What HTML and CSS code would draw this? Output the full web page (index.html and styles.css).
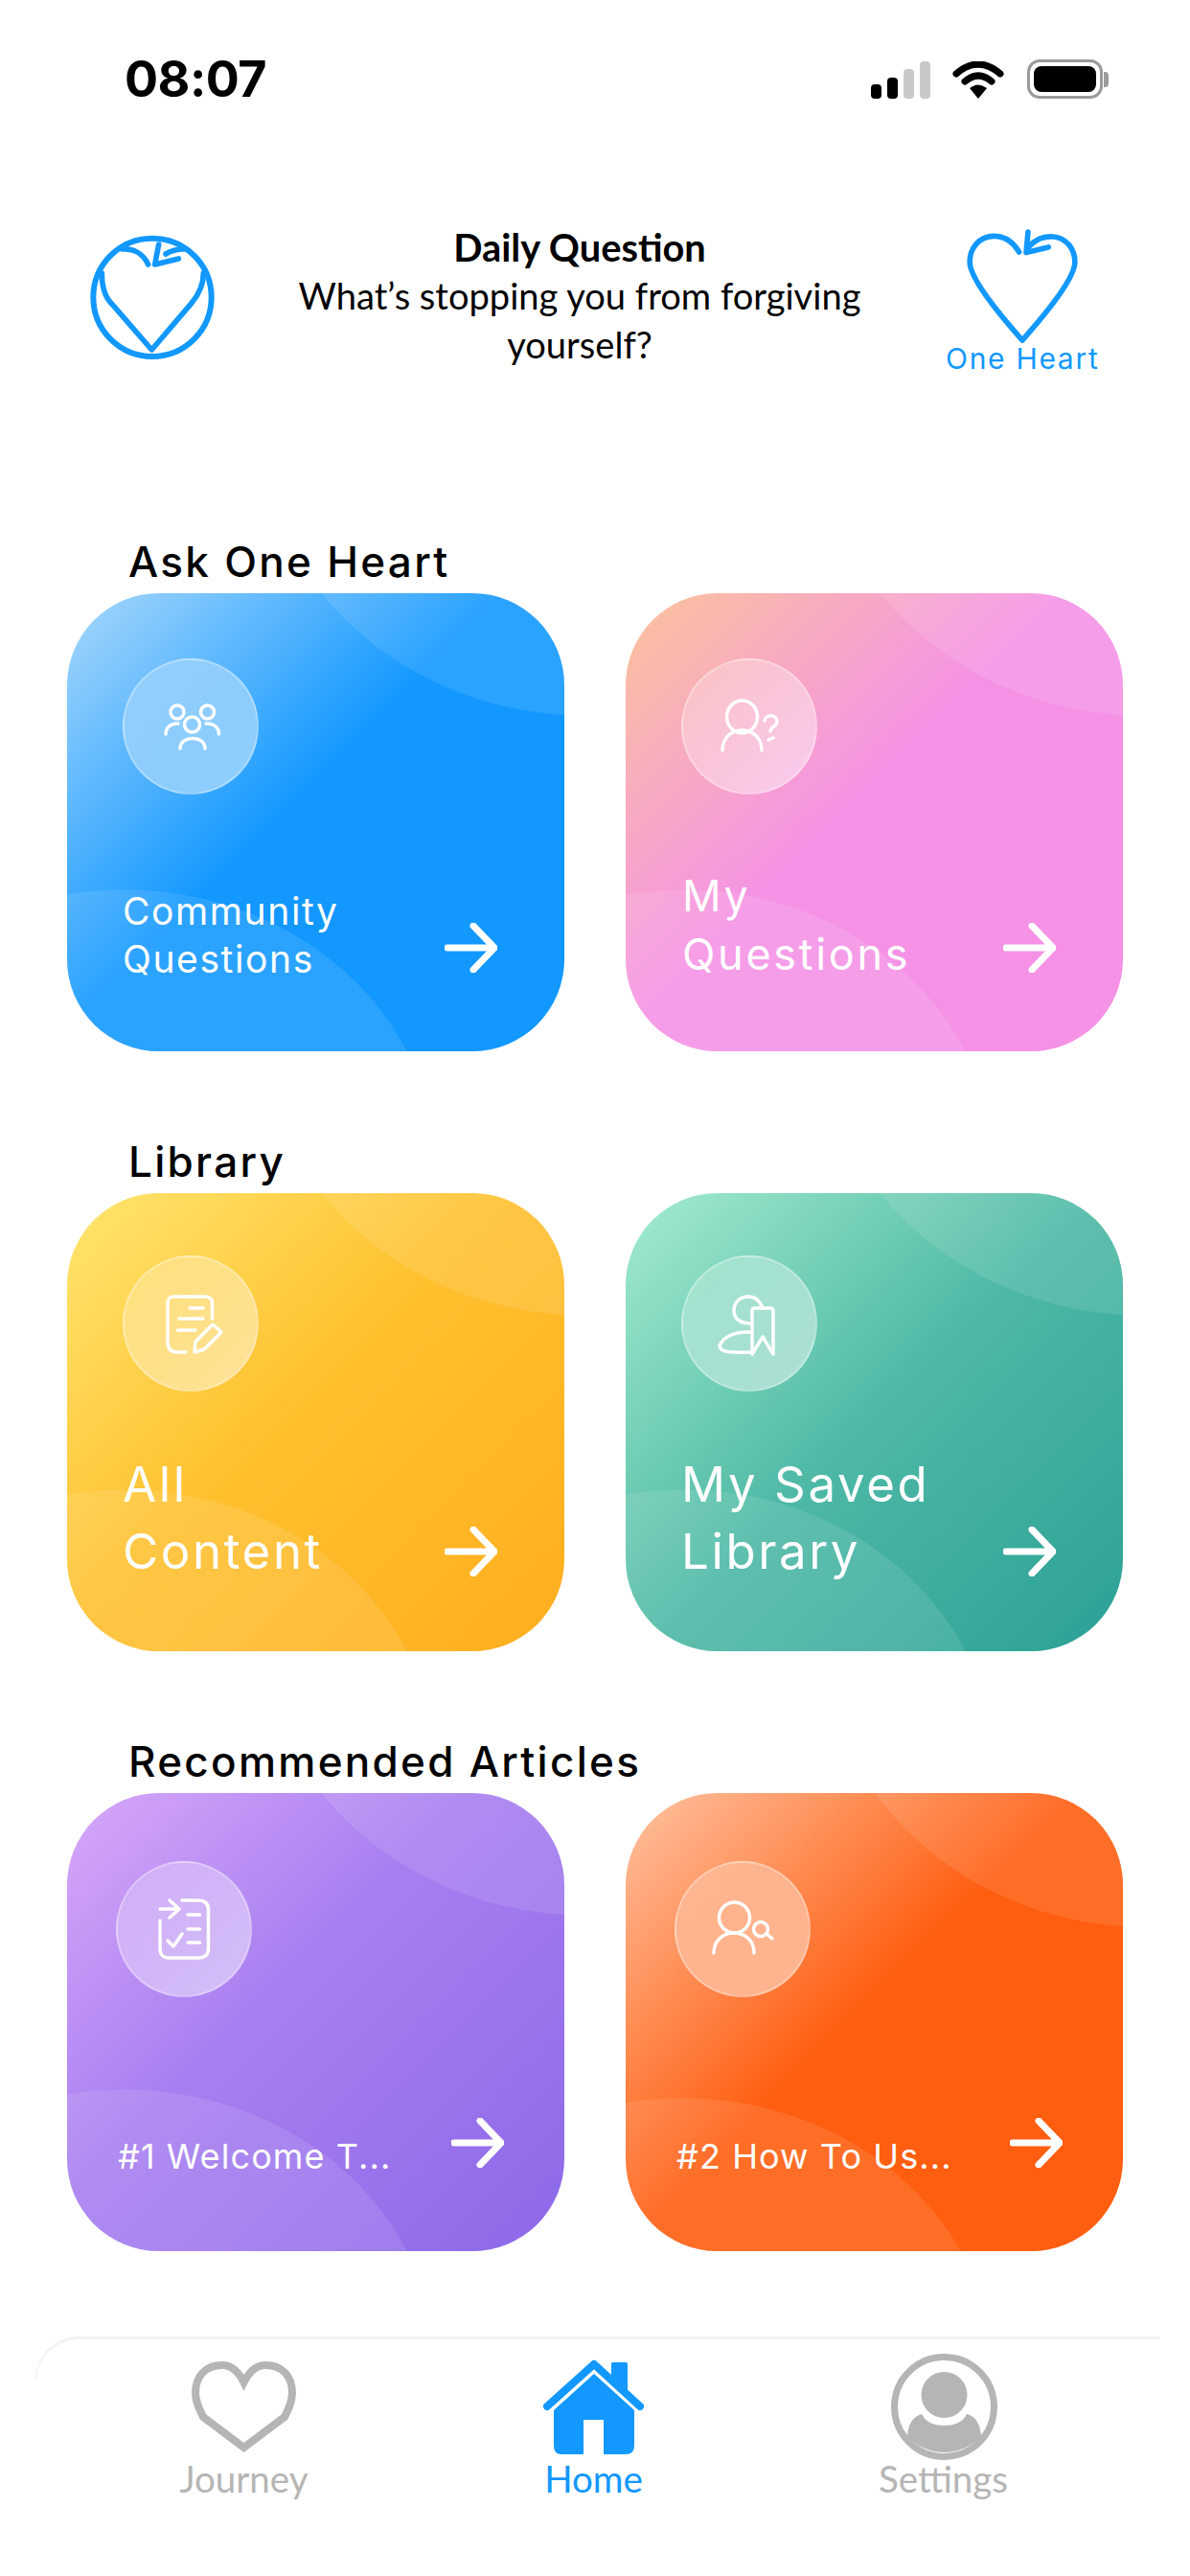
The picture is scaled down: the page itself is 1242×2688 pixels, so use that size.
FILE: index.html
```html
<!DOCTYPE html>
<html lang="en">
<head>
<meta charset="utf-8">
<title>One Heart</title>
<link rel="stylesheet" href="styles.css">
</head>
<body>
<div class="screen">
  <div class="status">
    <span class="time">08:07</span>
    <div class="status-icons">
      <div class="signal"><i class="b1"></i><i class="b2"></i><i class="b3"></i><i class="b4"></i></div>
      <svg class="wifi" viewBox="0 0 54 39"><path d="M4 13Q27 -7 50 13" fill="none" stroke="#000" stroke-width="7" stroke-linecap="round"/><path d="M13 21Q27 9 41 21" fill="none" stroke="#000" stroke-width="7" stroke-linecap="round"/><path d="M18 28Q27 21 36 28L27 39Z" fill="#000"/></svg>
      <div class="battery"><div class="battery-body"><div class="battery-fill"></div></div><div class="battery-nub"></div></div>
    </div>
  </div>

  <header class="daily">
    <svg class="logo-ring" viewBox="100 105 396 396"><circle cx="298" cy="301" r="185" fill="none" stroke="#1298ff" stroke-width="18"/><g fill="none" stroke="#1298ff" stroke-width="17" stroke-linecap="round" stroke-linejoin="round"><path d="M140 225C140 270 150 300 170 320L296 465L420 320C445 290 458 260 458 225"/><path d="M205 150C240 148 270 165 285 198"/><path d="M318 135L306 198L380 180M340 165Q365 150 395 150"/></g></svg>
    <div class="daily-text">
      <div class="daily-title">Daily Question</div>
      <div class="daily-question">What’s stopping you from forgiving yourself?</div>
    </div>
    <div class="brand">
      <svg class="brand-heart" viewBox="140 80 360 370"><path d="M310 158C290 125 262 108 232 108C185 108 155 145 155 190C155 240 240 345 320 435C400 345 485 240 485 190C485 145 455 112 415 110C385 108 360 120 340 142M338 95L332 160L402 143" fill="none" stroke="#1298ff" stroke-width="17" stroke-linecap="round" stroke-linejoin="round"/></svg>
      <div class="brand-name">One Heart</div>
    </div>
  </header>

  <main class="sections">
    <section class="section">
      <h2 class="section-title">Ask One Heart</h2>
      <div class="cards">
        <a class="card card-blue">
          <span class="bubble bubble-a"><svg class="glyph" viewBox="0 0 142 142"><circle cx="72.5" cy="69" r="8"/><circle cx="57" cy="56" r="7"/><circle cx="88.5" cy="56" r="7"/><path d="M45 79C45 72 50 68 58 68M100.500 79C100.500 72 95 68 87 68M60 94C60 80 86 80 86 94"/></svg></span>
          <span class="card-foot foot-blue"><span class="label label-blue">Community<br>Questions</span><svg class="arrow" viewBox="0 0 55 52"><path d="M3 26H52M30 3L52 26L30 49"/></svg></span>
        </a>
        <a class="card card-pink">
          <span class="bubble bubble-a"><svg class="glyph" viewBox="0 0 142 142"><ellipse cx="63.500" cy="61" rx="16" ry="17"/><path d="M43 96C43 68 84 68 84 96M87 65C88 58 100 58 100 66C100 71 93 71 93 76"/><path d="M91 85L96 83"/></svg></span>
          <span class="card-foot foot-pink"><span class="label label-pink">My<br>Questions</span><svg class="arrow" viewBox="0 0 55 52"><path d="M3 26H52M30 3L52 26L30 49"/></svg></span>
        </a>
      </div>
    </section>

    <section class="section">
      <h2 class="section-title">Library</h2>
      <div class="cards">
        <a class="card card-yellow">
          <span class="bubble bubble-b"><svg class="glyph" viewBox="0 0 142 142"><path d="M93.500 66V50C93.500 45 90 43 86 43H54C49 43 47 45 47 50V90C47 98 51 101 57 101H66M70 55H84M59 66H84M57.500 78H76"/><path d="M94 72L103 80L85 98L75 101L76 90Z"/></svg></span>
          <span class="card-foot foot-large"><span class="label label-large">All<br>Content</span><svg class="arrow" viewBox="0 0 55 52"><path d="M3 26H52M30 3L52 26L30 49"/></svg></span>
        </a>
        <a class="card card-green">
          <span class="bubble bubble-b"><svg class="glyph" viewBox="0 0 142 142"><path d="M85 55C82 47 77 43 70 43C61 43 55 49 55 58C55 66 62 71 72 71"/><path d="M74 103V58C74 56 75 55 77 55H93C95 55 96 56 96 58V103L85 85Z"/><path d="M72 80C56 79 44 85 40 94C40 100 48 102 72 101"/></svg></span>
          <span class="card-foot foot-large"><span class="label label-large">My Saved<br>Library</span><svg class="arrow" viewBox="0 0 55 52"><path d="M3 26H52M30 3L52 26L30 49"/></svg></span>
        </a>
      </div>
    </section>

    <section class="section">
      <h2 class="section-title">Recommended Articles</h2>
      <div class="cards">
        <a class="card card-purple">
          <span class="bubble bubble-c"><svg class="glyph" viewBox="0 0 142 142"><path d="M69 41H86C93 41 96.500 44 96.500 51V91C96.500 98 93 101 86 101H56C49 101 46 98 46 91V62"/><path d="M46 50H66M56 41L66 50L56 59M75 56H87.500M75 71H87.500M75 85H87.500M54 83L60 89L69 76"/></svg></span>
          <span class="card-foot foot-small"><span class="label label-small">#1 Welcome T...</span><svg class="arrow" viewBox="0 0 55 52"><path d="M3 26H52M30 3L52 26L30 49"/></svg></span>
        </a>
        <a class="card card-orange">
          <span class="bubble bubble-c"><svg class="glyph" viewBox="0 0 142 142"><circle cx="62.500" cy="59" r="16"/><path d="M41 96C41 68 83 68 83 96"/><circle cx="90" cy="71" r="7.500"/><path d="M96 76L102 81"/></svg></span>
          <span class="card-foot foot-small"><span class="label label-small">#2 How To Us...</span><svg class="arrow" viewBox="0 0 55 52"><path d="M3 26H52M30 3L52 26L30 49"/></svg></span>
        </a>
      </div>
    </section>
  </main>

  <nav class="tabs">
    <a class="tab">
      <span class="tab-icon"><svg class="tab-heart" viewBox="0 0 111 96"><path d="M55.500 22C49 9 42 4 33 4C15 4 5 16 5 33C5 42 9 50 13 58L55.500 90L98 58C102 50 106 42 106 33C106 16 96 4 78 4C69 4 62 9 55.500 22Z" fill="none" stroke="#b5b5b5" stroke-width="8"/></svg></span>
      <span class="tab-label">Journey</span>
    </a>
    <a class="tab tab-active">
      <span class="tab-icon"><svg class="tab-home" viewBox="0 0 105 99"><path d="M71 4Q71 3 73 3H86Q88 3 88 5V32L71 17Z" fill="#1298ff"/><path d="M4 49L53 5L101 49" fill="none" stroke="#1298ff" stroke-width="8" stroke-linecap="round" stroke-linejoin="round"/><path d="M53 15L95 53V90Q95 99 86 99H63V63H42V99H19Q11 99 11 90V53Z" fill="#1298ff"/></svg></span>
      <span class="tab-label">Home</span>
    </a>
    <a class="tab">
      <span class="tab-icon tab-icon-avatar"><svg class="tab-avatar" viewBox="0 0 111 111"><circle cx="55.500" cy="55.500" r="52" fill="none" stroke="#b5b5b5" stroke-width="7"/><circle cx="55.500" cy="43" r="24" fill="#b5b5b5"/><path d="M17 86C18 72 24 65 32 63C36 72 46 75 55.500 75C65 75 75 72 79 63C87 65 93 72 94 86A52 52 0 0 1 17 86Z" fill="#b5b5b5"/></svg></span>
      <span class="tab-label">Settings</span>
    </a>
  </nav>
</div>
</body>
</html>
```
FILE: styles.css
```css
* { box-sizing: border-box; }
html, body { margin: 0; padding: 0; background: #fff; }
.screen { width: 1242px; height: 2688px; overflow: hidden; background: #fff; font-family: "Lato", sans-serif; color: #000; }

/* status bar */
.status { display: flex; justify-content: space-between; align-items: flex-start; height: 110px; padding: 62px 85px 0 130px; }
.time { font-family: "Inter", sans-serif; font-weight: 700; font-size: 52px; line-height: 41px; letter-spacing: -0.5px; }
.status-icons { display: flex; align-items: flex-start; }
.signal { display: flex; align-items: flex-end; gap: 6px; height: 39px; margin-top: 2px; }
.signal i { display: block; width: 11px; border-radius: 4px; background: #000; }
.signal .b1 { height: 15px; }
.signal .b2 { height: 22px; }
.signal .b3 { height: 31px; background: #c9c9c9; }
.signal .b4 { height: 39px; background: #c9c9c9; }
.wifi { width: 54px; height: 39px; margin: 2px 24px 0 23px; }
.battery { display: flex; align-items: center; height: 41px; }
.battery-body { width: 79px; height: 41px; padding: 4px; border: 3px solid #9a9a9a; border-radius: 13px; }
.battery-fill { width: 100%; height: 100%; border-radius: 8px; background: #000; }
.battery-nub { width: 5px; height: 16px; margin-left: 1px; border-radius: 0 4px 4px 0; background: #9a9a9a; }

/* daily question */
.daily { display: flex; align-items: flex-start; margin-top: 122px; padding-left: 93px; }
.logo-ring { display: block; width: 132px; height: 132px; margin-top: 13px; flex: none; }
.daily-text { width: 640px; margin: 0 60px 0 60px; text-align: center; font-size: 38.1px; line-height: 51px; }
.daily-title { font-weight: 700; font-size: 39.8px; }
.brand { width: 160px; margin: 5px 0 0 2px; text-align: center; }
.brand-heart { display: block; width: 120px; height: 123px; margin: 0 auto; }
.brand-name { margin-top: -2px; font-family: "Inter", sans-serif; font-size: 30px; line-height: 32px; color: #1298ff; white-space: nowrap; letter-spacing: 1.7px; }

/* sections */
.sections { display: flex; flex-direction: column; gap: 88px; margin-top: 169px; }
.section-title { margin: 0; height: 60px; padding-left: 134px; font-family: "Inter", sans-serif; font-weight: 500; font-size: 44px; line-height: 54px; letter-spacing: 2.3px; color: #000; }
.cards { display: grid; grid-template-columns: 519px 519px; gap: 64px; padding-left: 70px; }

.card { --top-ry: 318px; --low-y: 600px; position: relative; display: flex; flex-direction: column; justify-content: space-between; height: 478px; border-radius: 96px; overflow: hidden; color: #fff; }
.card::before { content: ""; position: absolute; inset: 0; background:
  radial-gradient(343px var(--top-ry) at 540px -190px, rgba(255,255,255,.1) 99.7%, rgba(255,255,255,0) 100%),
  radial-gradient(325px 291px at 60px var(--low-y), rgba(255,255,255,.1) 99.7%, rgba(255,255,255,0) 100%); }
.card > * { position: relative; }
.card-blue { background: linear-gradient(135deg, #a8d8fc 0%, #1298ff 46%, #1298ff 100%); }
.card-pink { background: linear-gradient(135deg, #fbc39a 0%, #f592e6 46%, #f592e6 100%); }
.card-yellow { background: linear-gradient(135deg, #ffe670 0%, #ffc12f 45%, #ffad1e 100%); }
.card-green { background: linear-gradient(135deg, #a4eccf 0%, #4db8a5 50%, #2ba095 100%); }
.card-purple { background: linear-gradient(135deg, #d8a8fa 0%, #a77ff0 42%, #8c68e8 100%); }
.card-orange { --top-ry: 330px; --low-y: 609px; background: linear-gradient(135deg, #ffc3a2 0%, #ff5d0f 48%, #ff5d0f 100%); }

.bubble { display: block; width: 142px; height: 142px; border-radius: 50%; border: 2px solid rgba(255,255,255,.28); background: linear-gradient(135deg, rgba(255,255,255,.2), rgba(255,255,255,.5)); }
.bubble-a { margin: 68px 0 0 58px; }
.bubble-b { margin: 65px 0 0 58px; }
.bubble-c { margin: 71px 0 0 51px; }
.glyph { display: block; width: 142px; height: 142px; margin: -2px; fill: none; stroke: #fff; stroke-width: 3.5px; stroke-linecap: round; stroke-linejoin: round; }

.card-foot { display: flex; justify-content: space-between; align-items: flex-end; }
.foot-blue { padding: 0 70px 82px 58px; }
.foot-pink { padding: 0 70px 82px 59px; }
.foot-large { padding: 0 70px 78px 58px; }
.foot-small { padding: 0 63px 87px 53px; }
.label { font-family: "Inter", sans-serif; font-weight: 400; white-space: nowrap; }
.label-blue { font-size: 39px; line-height: 50px; margin-bottom: -11px; letter-spacing: 1.6px; }
.label-pink { font-size: 45px; line-height: 61px; margin-bottom: -11px; letter-spacing: 2.7px; }
.label-large { font-size: 51px; line-height: 70px; margin-bottom: -9px; letter-spacing: 2.6px; }
.label-small { font-size: 36px; line-height: 46px; margin-bottom: -11px; letter-spacing: 1.1px; }
.arrow { display: block; width: 55px; height: 52px; flex: none; fill: none; stroke: #fff; stroke-width: 7px; stroke-linecap: round; stroke-linejoin: round; }

/* tab bar */
.tabs { position: relative; display: grid; grid-template-columns: repeat(3, 365px); width: 1174px; height: 200px; margin: 89px 0 0 36px; padding: 3px 0 0 36px; }
.tabs::before { content: ""; position: absolute; top: 0; left: 0; width: 56px; height: 44px; border-top: 3px solid #f3f3f3; border-left: 2px solid #f6f6f6; border-top-left-radius: 55px; }
.tabs::after { content: ""; position: absolute; top: 0; left: 55px; right: 0; height: 3px; background: #f3f3f3; }
.tab { display: flex; flex-direction: column; align-items: center; color: #b5b5b5; }
.tab-active { color: #1298ff; }
.tab-icon { display: flex; align-items: center; justify-content: center; height: 111px; margin-top: 15px; }
.tab-icon-avatar { padding-left: 2px; }
.tab-heart { display: block; width: 111px; height: 96px; }
.tab-home { display: block; width: 105px; height: 99px; }
.tab-avatar { display: block; width: 111px; height: 111px; }
.tab-label { margin-top: -3px; font-size: 38.5px; line-height: 44px; }
```
